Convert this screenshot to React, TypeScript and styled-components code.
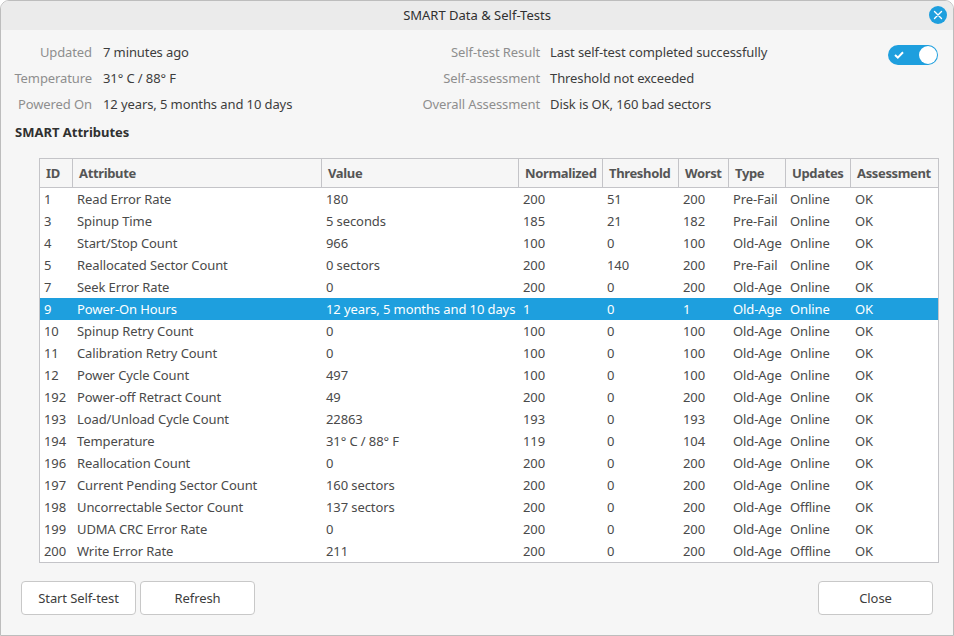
import React from 'react'
import styled, { createGlobalStyle } from 'styled-components'

const GlobalStyle = createGlobalStyle`
  html, body {
    margin: 0;
    padding: 0;
    background: #fff;
    font-family: "Noto Sans", "Liberation Sans", sans-serif;
    font-size: 13px;
    letter-spacing: -0.1px;
    color: #3d3d3d;
  }
`

const Window = styled.div`
  box-sizing: border-box;
  width: 954px;
  height: 636px;
  display: flex;
  flex-direction: column;
  background: #f6f6f6;
  border: 1px solid #bdbdbd;
  border-top-left-radius: 9px;
  border-top-right-radius: 9px;
  overflow: hidden;
`

const TitleBar = styled.div`
  flex: none;
  position: relative;
  box-sizing: border-box;
  height: 29px;
  padding-bottom: 1px;
  display: flex;
  align-items: center;
  justify-content: center;
  background: #ebebeb;
  font-size: 13px;
  letter-spacing: 0;
  color: #303030;
`

const CloseDot = styled.div`
  position: absolute;
  top: 5px;
  right: 6px;
  width: 18px;
  height: 18px;
  border-radius: 50%;
  background: #1e9fde;
  display: flex;
  align-items: center;
  justify-content: center;
`

const InfoArea = styled.div`
  flex: none;
  height: 91px;
  padding-top: 9px;
  box-sizing: border-box;
  display: flex;
  align-items: flex-start;
`

const InfoGrid = styled.div<{ $labelWidth: number; $width: number; $gap: number }>`
  width: ${p => p.$width}px;
  display: grid;
  grid-template-columns: ${p => p.$labelWidth}px 1fr;
  grid-auto-rows: 26px;
  column-gap: ${p => p.$gap}px;
  align-items: center;
`

const InfoLabel = styled.span`
  text-align: right;
  color: #8e8e8e;
  white-space: nowrap;
`

const InfoValue = styled.span`
  white-space: nowrap;
`

const Toggle = styled.div`
  box-sizing: border-box;
  margin: 6px 15px 0 auto;
  width: 50px;
  height: 20px;
  border-radius: 10px;
  background: #1e9fde;
  display: flex;
  align-items: center;
  justify-content: space-between;
  padding: 0 1px 0 6px;
`

const Knob = styled.div`
  width: 18px;
  height: 18px;
  border-radius: 50%;
  background: #fff;
`

const SectionTitle = styled.div`
  flex: none;
  height: 26px;
  margin-left: 14px;
  margin-top: -2px;
  font-weight: 700;
  letter-spacing: 0;
  color: #303030;
  display: flex;
  align-items: center;
`

const TableFrame = styled.div`
  flex: none;
  box-sizing: border-box;
  width: 900px;
  height: 405px;
  margin: 13px 0 0 38px;
  border: 1px solid #c4c4c8;
  background: #fff;
  overflow: hidden;
`

const Row = styled.div<{ $selected?: boolean }>`
  display: grid;
  grid-template-columns: 33px 249px 197px 84px 76px 50px 57px 65px 1fr;
  height: 22px;
  align-items: center;
  white-space: nowrap;
  background: ${p => (p.$selected ? '#1e9fde' : '#fff')};
  color: ${p => (p.$selected ? '#fff' : '#4a4a4a')};
`

const HeaderRow = styled(Row)`
  grid-template-columns: 32px 249px 197px 84px 76px 50px 57px 65px 1fr;
  height: 28px;
  background: #f6f6f6;
  border-bottom: 1px solid #c4c4c8;
  box-sizing: content-box;
`

const HeaderCell = styled.div`
  height: 100%;
  display: flex;
  align-items: center;
  padding-left: 6px;
  font-weight: 700;
  letter-spacing: -0.35px;
  color: #555;
  border-left: 1px solid #c4c4c8;
  box-sizing: border-box;
  &:first-child {
    border-left: none;
  }
`

const Cell = styled.div`
  padding-left: 4px;
  overflow: hidden;
`

const ButtonBar = styled.div`
  flex: none;
  display: flex;
  gap: 4px;
  margin: 18px 20px 0;
`

const Button = styled.div<{ $push?: boolean }>`
  box-sizing: border-box;
  width: 115px;
  height: 34px;
  display: flex;
  align-items: center;
  justify-content: center;
  background: #fff;
  border: 1px solid #c8c8c8;
  border-radius: 4px;
  color: #3d3d3d;
  margin-left: ${p => (p.$push ? 'auto' : '0')};
`

const columns = ['ID', 'Attribute', 'Value', 'Normalized', 'Threshold', 'Worst', 'Type', 'Updates', 'Assessment']

const attributes = [
  ['1', 'Read Error Rate', '180', '200', '51', '200', 'Pre-Fail', 'Online'],
  ['3', 'Spinup Time', '5 seconds', '185', '21', '182', 'Pre-Fail', 'Online'],
  ['4', 'Start/Stop Count', '966', '100', '0', '100', 'Old-Age', 'Online'],
  ['5', 'Reallocated Sector Count', '0 sectors', '200', '140', '200', 'Pre-Fail', 'Online'],
  ['7', 'Seek Error Rate', '0', '200', '0', '200', 'Old-Age', 'Online'],
  ['9', 'Power-On Hours', '12 years, 5 months and 10 days', '1', '0', '1', 'Old-Age', 'Online'],
  ['10', 'Spinup Retry Count', '0', '100', '0', '100', 'Old-Age', 'Online'],
  ['11', 'Calibration Retry Count', '0', '100', '0', '100', 'Old-Age', 'Online'],
  ['12', 'Power Cycle Count', '497', '100', '0', '100', 'Old-Age', 'Online'],
  ['192', 'Power-off Retract Count', '49', '200', '0', '200', 'Old-Age', 'Online'],
  ['193', 'Load/Unload Cycle Count', '22863', '193', '0', '193', 'Old-Age', 'Online'],
  ['194', 'Temperature', '31° C / 88° F', '119', '0', '104', 'Old-Age', 'Online'],
  ['196', 'Reallocation Count', '0', '200', '0', '200', 'Old-Age', 'Online'],
  ['197', 'Current Pending Sector Count', '160 sectors', '200', '0', '200', 'Old-Age', 'Online'],
  ['198', 'Uncorrectable Sector Count', '137 sectors', '200', '0', '200', 'Old-Age', 'Offline'],
  ['199', 'UDMA CRC Error Rate', '0', '200', '0', '200', 'Old-Age', 'Online'],
  ['200', 'Write Error Rate', '211', '200', '0', '200', 'Old-Age', 'Offline'],
]

const leftInfo = [
  ['Updated', '7 minutes ago'],
  ['Temperature', '31° C / 88° F'],
  ['Powered On', '12 years, 5 months and 10 days'],
]

const rightInfo = [
  ['Self-test Result', 'Last self-test completed successfully'],
  ['Self-assessment', 'Threshold not exceeded'],
  ['Overall Assessment', 'Disk is OK, 160 bad sectors'],
]

export default function App() {
  return (
    <Window>
      <GlobalStyle />
      <TitleBar>
        SMART Data &amp; Self-Tests
        <CloseDot>
          <svg width="10" height="10" viewBox="0 0 10 10">
            <path d="M1.5 1.5 L8.5 8.5 M8.5 1.5 L1.5 8.5" stroke="#fff" strokeWidth="1.4" strokeLinecap="round" />
          </svg>
        </CloseDot>
      </TitleBar>
      <InfoArea>
        <InfoGrid $labelWidth={91} $width={411} $gap={11}>
          {leftInfo.map(([label, value]) => (
            <React.Fragment key={label}>
              <InfoLabel>{label}</InfoLabel>
              <InfoValue>{value}</InfoValue>
            </React.Fragment>
          ))}
        </InfoGrid>
        <InfoGrid $labelWidth={128} $width={400} $gap={10}>
          {rightInfo.map(([label, value]) => (
            <React.Fragment key={label}>
              <InfoLabel>{label}</InfoLabel>
              <InfoValue>{value}</InfoValue>
            </React.Fragment>
          ))}
        </InfoGrid>
        <Toggle>
          <svg width="10" height="8" viewBox="0 0 10 8">
            <path d="M1 4 L3.8 6.6 L9 1.2" fill="none" stroke="#fff" strokeWidth="2" />
          </svg>
          <Knob />
        </Toggle>
      </InfoArea>
      <SectionTitle>SMART Attributes</SectionTitle>
      <TableFrame>
        <HeaderRow>
          {columns.map(c => (
            <HeaderCell key={c}>{c}</HeaderCell>
          ))}
        </HeaderRow>
        {attributes.map(row => (
          <Row key={row[0]} $selected={row[0] === '9'}>
            {row.map((value, i) => (
              <Cell key={i}>{value}</Cell>
            ))}
            <Cell>OK</Cell>
          </Row>
        ))}
      </TableFrame>
      <ButtonBar>
        <Button>Start Self-test</Button>
        <Button>Refresh</Button>
        <Button $push>Close</Button>
      </ButtonBar>
    </Window>
  )
}
